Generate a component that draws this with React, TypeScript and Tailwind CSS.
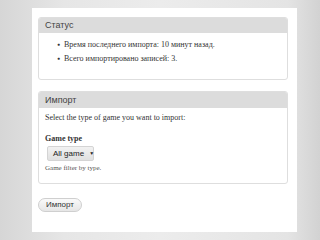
import React from "react";

export default function App() {
  const serif = { fontFamily: '"Liberation Serif", "Times New Roman", serif' };
  const sans = { fontFamily: '"Liberation Sans", Arial, sans-serif' };
  return (
    <div
      className="w-[320px] h-[240px] overflow-hidden bg-[linear-gradient(90deg,#d6d6d6_0%,#e6e6e6_20%,#ececec_50%,#e4e4e4_90%,#d2d2d2_100%)] pt-[8px] pl-[32px]"
    >
      <div className="w-[265px] h-[224px] bg-white pt-[9px] pl-[6px] pr-[9px]">
        <div className="border border-[#dedede] rounded-[3px] h-[63px]">
          <div
            className="h-[15px] bg-[#dcdcdc] text-[#444] text-[9px] leading-[15px] pl-[6px] rounded-t-[2px]"
            style={sans}
          >
            Статус
          </div>
          <ul className="pl-[18px] pt-[5px] text-[8px] text-[#333] leading-[14px]" style={serif}>
            <li className="flex items-center">
              <span className="w-[7px] text-[5px]">●</span>
              Время последнего импорта: 10 минут назад.
            </li>
            <li className="flex items-center">
              <span className="w-[7px] text-[5px]">●</span>
              Всего импортировано записей: 3.
            </li>
          </ul>
        </div>
        <div className="border border-[#dedede] rounded-[3px] h-[93px] mt-[11px]">
          <div
            className="h-[16px] bg-[#dcdcdc] text-[#444] text-[9px] leading-[16px] pl-[6px] rounded-t-[2px]"
            style={sans}
          >
            Импорт
          </div>
          <div className="pl-[6px] text-[#333]" style={serif}>
            <div className="text-[8px] leading-[10px] mt-[5px]">
              Select the type of game you want to import:
            </div>
            <div className="text-[8px] leading-[10px] font-bold mt-[11px]">Game type</div>
            <div
              className="mt-[2px] ml-[2px] w-[47px] h-[15px] rounded-[2px] border border-[#d4d4d4] bg-[linear-gradient(#f2f2f2,#e0e0e0)] flex items-center pl-[5px] text-[8px] text-[#222] whitespace-nowrap"
              style={sans}
            >
              All game
              <span className="ml-[5px] text-[5px]">▼</span>
            </div>
            <div className="text-[7px] leading-[10px] text-[#555] mt-[2px]">
              Game filter by type.
            </div>
          </div>
        </div>
        <div
          className="mt-[14px] w-[44px] h-[14px] rounded-full border border-[#cfcfcf] bg-[linear-gradient(#fafafa,#e6e6e6)] text-[8px] text-[#333] flex items-center justify-center"
          style={sans}
        >
          Импорт
        </div>
      </div>
    </div>
  );
}
